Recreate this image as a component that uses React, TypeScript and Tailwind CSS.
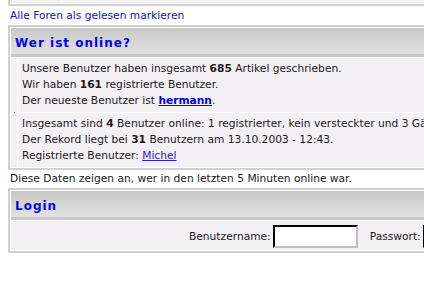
import React from "react";

const Hdr = ({ children }: { children: React.ReactNode }) => (
  <div className="h-[29px] bg-linear-to-b from-[#c8c8c8] to-[#e2e2e2] border-b-[3px] border-[#c8c8c8] pl-[4px] pt-[7px] leading-[16px] text-[12px] font-bold tracking-[1px] text-[#0000ee] whitespace-nowrap">
    {children}
  </div>
);

const Inp = () => (
  <div className="w-[85px] h-[23px] bg-white border-2 border-t-black border-l-black border-r-[#c0c0c0] border-b-[#c0c0c0] shrink-0" />
);

export default function App() {
  return (
    <div className="w-[424px] h-[292px] overflow-hidden bg-white font-['DejaVu_Sans',sans-serif] text-[10.667px] text-[#1a1a1a]">
      <div className="w-[720px] pl-[8px]">
        {/* remnant of previous table */}
        <div className="border-x-2 border-b-2 border-[#d1d1d1] px-[1px] pb-[1px] flex gap-[1px] bg-white">
          <div className="w-[50px] h-[3px] bg-[#f4f1f4]" />
          <div className="flex-1 h-[3px] bg-[#f4f1f4]" />
        </div>

        <div className="h-[19px] pl-[2px] pt-[2px] leading-[16px] whitespace-nowrap">
          <a className="text-[#1010cc] no-underline">Alle Foren als gelesen markieren</a>
        </div>

        {/* Wer ist online */}
        <div className="border-2 border-[#d1d1d1] p-[1px] bg-white flex flex-col gap-[1px]">
          <Hdr>Wer ist online?</Hdr>
          <div className="flex gap-[1px]">
            <div className="w-[6px] bg-[#f4f1f4] flex items-center justify-center shrink-0">
              <div className="w-[1px] h-[1px] bg-[#8a8a8a]" />
            </div>
            <div className="flex-1 flex flex-col gap-[1px]">
              <div className="bg-[#f4f1f4] pl-[4px] py-[3px] leading-[16px] whitespace-nowrap">
                <div>
                  Unsere Benutzer haben insgesamt <b>685</b> Artikel geschrieben.
                </div>
                <div>
                  Wir haben <b>161</b> registrierte Benutzer.
                </div>
                <div>
                  Der neueste Benutzer ist{" "}
                  <b>
                    <a className="text-[#0000ee] underline">hermann</a>
                  </b>
                  .
                </div>
              </div>
              <div className="bg-[#f4f1f4] pl-[4px] py-[3px] leading-[16px] whitespace-nowrap">
                <div>
                  Insgesamt sind <b>4</b> Benutzer online: 1 registrierter, kein versteckter und 3 Gäste.
                </div>
                <div>
                  Der Rekord liegt bei <b>31</b> Benutzern am 13.10.2003 - 12:43.
                </div>
                <div>
                  Registrierte Benutzer: <a className="text-[#2222ee] underline">Michel</a>
                </div>
              </div>
            </div>
          </div>
        </div>

        <div className="h-[18px] pl-[2px] pt-[1px] leading-[16px] whitespace-nowrap">
          Diese Daten zeigen an, wer in den letzten 5 Minuten online war.
        </div>

        {/* Login */}
        <div className="border-2 border-[#d1d1d1] p-[1px] bg-white flex flex-col gap-[1px]">
          <Hdr>Login</Hdr>
          <div className="bg-[#f4f1f4] h-[29px] pl-[178px] pt-[4px] flex items-start whitespace-nowrap">
            <span className="leading-[23px] mr-[2px]">Benutzername:</span>
            <Inp />
            <span className="leading-[23px] ml-[12px] mr-[2px]">Passwort:</span>
            <Inp />
          </div>
        </div>
      </div>
    </div>
  );
}
